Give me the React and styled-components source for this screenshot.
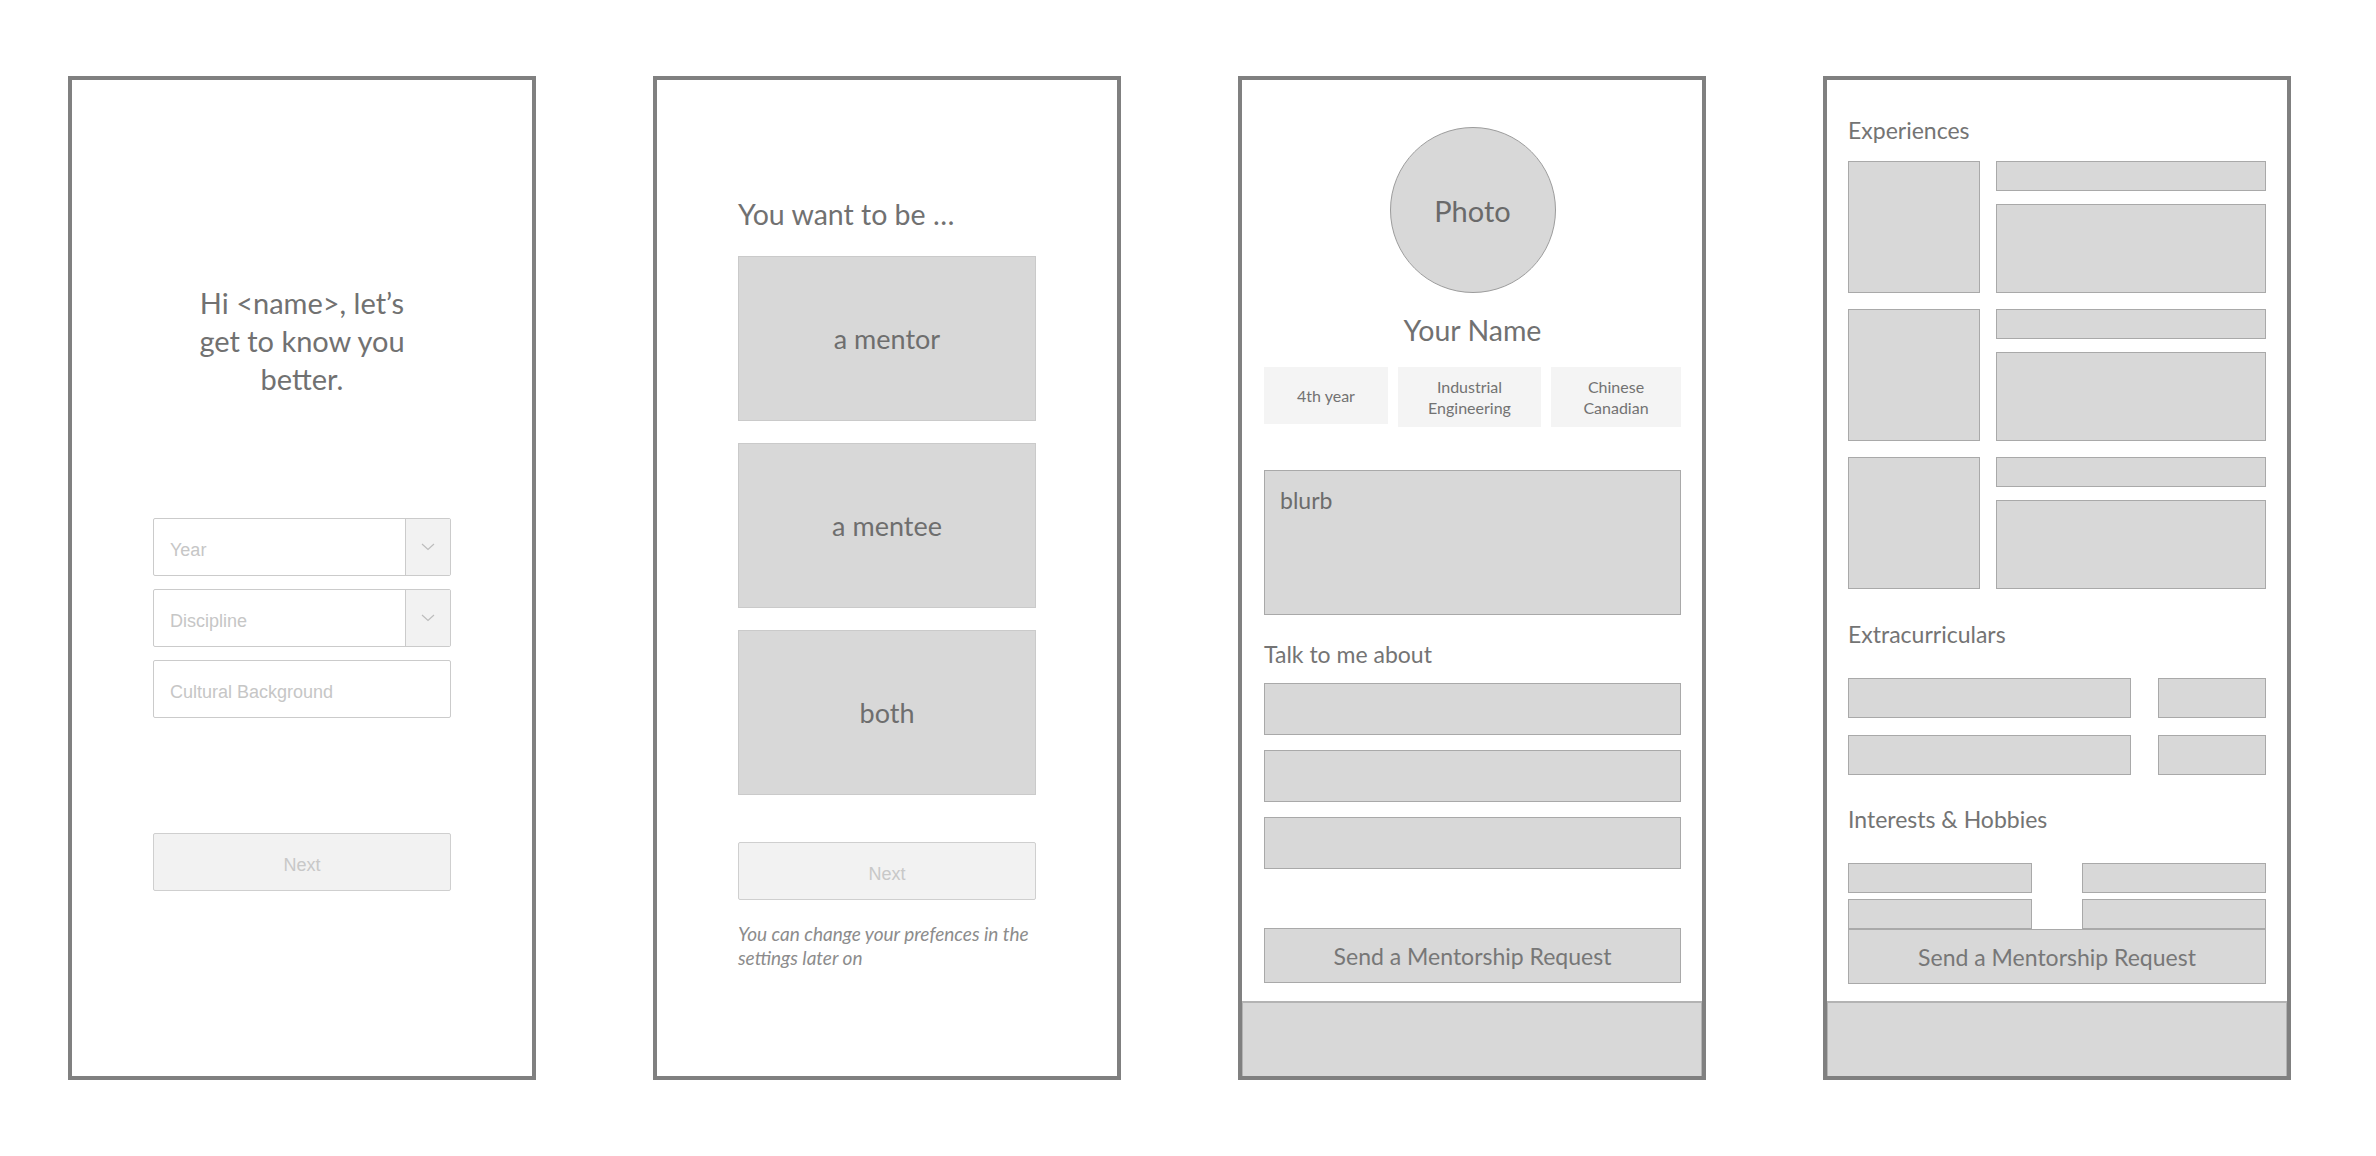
import React from 'react'
import styled, { createGlobalStyle } from 'styled-components';

const Global = createGlobalStyle`
  html, body {
    margin: 0;
    padding: 0;
    background: #fff;
  }
  body {
    font-family: Lato, "Open Sans", sans-serif;
    color: #6f6f6f;
  }
`

const Canvas = styled.div`
  display: flex;
  gap: 117px;
  padding: 76px 0 0 68px;
  width: 2376px;
  height: 1156px;
  box-sizing: border-box;
`

const Phone = styled.div`
  width: 468px;
  height: 1004px;
  box-sizing: border-box;
  border: 4px solid #808080;
  background: #fff;
  display: flex;
  flex-direction: column;
  overflow: hidden;
`

const Body = styled.div`
  flex: 1;
  display: flex;
  flex-direction: column;
  padding: ${p => p.pad || '0'};
  align-items: ${p => (p.center ? 'center' : 'stretch')};
`

const Footer = styled.div`
  height: 75px;
  box-sizing: border-box;
  background: #d8d8d8;
  border-top: 2px solid #b3b3b3;
  border-left: 1px solid #b3b3b3;
  border-right: 1px solid #b3b3b3;
`

/* screen 1 */
const Greeting = styled.h1`
  margin: 0;
  text-align: center;
  font-weight: 400;
  font-size: 29px;
  line-height: 38px;
  color: #717171;
`

const Form = styled.div`
  display: flex;
  flex-direction: column;
  gap: 13px;
  width: 298px;
  margin-top: 120px;
`

const Field = styled.div`
  height: 58px;
  box-sizing: border-box;
  border: 1px solid #cbcbcb;
  border-radius: 2px;
  background: #fff;
  display: flex;
  align-items: stretch;
`

const Placeholder = styled.span`
  flex: 1;
  display: flex;
  align-items: center;
  padding: 6px 0 0 16px;
  font-family: "Liberation Sans", Arial, sans-serif;
  font-size: 18px;
  color: #c6c6c6;
`

const Caret = styled.div`
  width: 44px;
  border-left: 1px solid #cbcbcb;
  background: #f2f2f2;
  display: flex;
  align-items: center;
  justify-content: center;
`

const NextButton = styled.div`
  width: 298px;
  height: 58px;
  box-sizing: border-box;
  margin-top: ${p => p.top || '0'};
  border: 1px solid #cfcfcf;
  border-radius: 2px;
  background: #f2f2f2;
  display: flex;
  align-items: center;
  justify-content: center;
  padding-top: 6px;
  font-family: "Liberation Sans", Arial, sans-serif;
  font-size: 18px;
  color: #c8c8c8;
`

/* screen 2 */
const Question = styled.h2`
  margin: 0 0 25px;
  font-weight: 400;
  font-size: 28.5px;
  line-height: 34px;
  color: #717171;
`

const Choices = styled.div`
  display: flex;
  flex-direction: column;
  gap: 22px;
  width: 298px;
`

const Choice = styled.div`
  height: 165px;
  box-sizing: border-box;
  background: #d8d8d8;
  border: 1px solid #cacaca;
  display: flex;
  align-items: center;
  justify-content: center;
  font-size: 27px;
  color: #6e6e6e;
`

const Hint = styled.p`
  margin: 22px 0 0;
  width: 310px;
  font-style: italic;
  font-size: 19px;
  line-height: 24px;
  color: #8c8c8c;
`

/* screen 3 */
const Photo = styled.div`
  width: 166px;
  height: 166px;
  box-sizing: border-box;
  align-self: center;
  border-radius: 50%;
  border: 1px solid #9c9c9c;
  background: #d8d8d8;
  display: flex;
  align-items: center;
  justify-content: center;
  font-size: 29px;
  color: #6a6a6a;
`

const Name = styled.div`
  margin-top: 20px;
  text-align: center;
  font-size: 28.5px;
  line-height: 34px;
  color: #717171;
`

const Tags = styled.div`
  display: flex;
  gap: 10px;
  margin-top: 20px;
  align-items: flex-start;
`

const Tag = styled.div`
  width: ${p => p.w}px;
  height: ${p => p.h}px;
  background: #f4f4f4;
  display: flex;
  align-items: center;
  justify-content: center;
  text-align: center;
  font-size: 16px;
  line-height: 21px;
  color: #727272;
`

const Block = styled.div`
  height: ${p => p.h}px;
  box-sizing: border-box;
  background: #d8d8d8;
  border: 1px solid #a9a9a9;
  margin-top: ${p => p.top || 0}px;
`

const Blurb = styled(Block)`
  padding: 14px 0 0 15px;
  font-size: 23px;
  line-height: 30px;
  color: #6c6c6c;
`

const Label = styled.div`
  margin-top: ${p => p.top}px;
  font-size: 23px;
  line-height: 28px;
  color: #747474;
`

const Bars = styled.div`
  display: flex;
  flex-direction: column;
  gap: 15px;
  margin-top: 15px;
`

const SendButton = styled.div`
  height: 55px;
  box-sizing: border-box;
  margin-top: ${p => p.top || 0}px;
  background: #d8d8d8;
  border: 1px solid #a9a9a9;
  display: flex;
  align-items: center;
  justify-content: center;
  font-size: 23px;
  color: #777;
`

/* screen 4 */
const ExperienceList = styled.div`
  display: flex;
  flex-direction: column;
  gap: 16px;
  margin-top: 17px;
`

const Experience = styled.div`
  display: grid;
  grid-template-columns: 132px 1fr;
  column-gap: 16px;
  height: 132px;
`

const ExperienceText = styled.div`
  display: grid;
  grid-template-rows: 30px 1fr;
  row-gap: 13px;
`

const Cell = styled.div`
  box-sizing: border-box;
  background: #d8d8d8;
  border: 1px solid #a9a9a9;
`

const CellGrid = styled.div`
  display: grid;
  grid-template-columns: ${p => p.cols};
  grid-auto-rows: ${p => p.rows};
  column-gap: ${p => p.cgap}px;
  row-gap: ${p => p.rgap}px;
  margin-top: 30px;
`

const Chevron = () => (
  <svg width="14" height="8" viewBox="0 0 14 8">
    <polyline points="1,1 7,6.5 13,1" fill="none" stroke="#bdbdbd" strokeWidth="1.2" />
  </svg>
)

const Select = ({ label }) => (
  <Field>
    <Placeholder>{label}</Placeholder>
    <Caret><Chevron /></Caret>
  </Field>
)

const App = () => {
  return (
    <>
      <Global />
      <Canvas>
        <Phone>
          <Body center pad="204px 0 0">
            <Greeting>Hi &lt;name&gt;, let’s<br />get to know you<br />better.</Greeting>
            <Form>
              <Select label="Year" />
              <Select label="Discipline" />
              <Field>
                <Placeholder>Cultural Background</Placeholder>
              </Field>
            </Form>
            <NextButton top="115px">Next</NextButton>
          </Body>
        </Phone>

        <Phone>
          <Body pad="117px 0 0 81px">
            <Question>You want to be …</Question>
            <Choices>
              <Choice>a mentor</Choice>
              <Choice>a mentee</Choice>
              <Choice>both</Choice>
            </Choices>
            <NextButton top="47px">Next</NextButton>
            <Hint>You can change your prefences in the settings later on</Hint>
          </Body>
        </Phone>

        <Phone>
          <Body pad="47px 21px 0 22px">
            <Photo>Photo</Photo>
            <Name>Your Name</Name>
            <Tags>
              <Tag w={124} h={57}>4th year</Tag>
              <Tag w={143} h={60}>Industrial<br />Engineering</Tag>
              <Tag w={130} h={60}>Chinese<br />Canadian</Tag>
            </Tags>
            <Blurb h={145} top={43}>blurb</Blurb>
            <Label top={25}>Talk to me about</Label>
            <Bars>
              <Block h={52} />
              <Block h={52} />
              <Block h={52} />
            </Bars>
            <SendButton top={59}>Send a Mentorship Request</SendButton>
          </Body>
          <Footer />
        </Phone>

        <Phone>
          <Body pad="36px 21px 0">
            <Label top={0}>Experiences</Label>
            <ExperienceList>
              {[0, 1, 2].map(i => (
                <Experience key={i}>
                  <Cell />
                  <ExperienceText>
                    <Cell />
                    <Cell />
                  </ExperienceText>
                </Experience>
              ))}
            </ExperienceList>
            <Label top={31}>Extracurriculars</Label>
            <CellGrid cols="283px 108px" rows="40px" cgap={27} rgap={17}>
              <Cell /><Cell /><Cell /><Cell />
            </CellGrid>
            <Label top={30}>Interests &amp; Hobbies</Label>
            <CellGrid cols="184px 184px" rows="30px" cgap={50} rgap={6}>
              <Cell /><Cell /><Cell /><Cell />
            </CellGrid>
            <SendButton top={0}>Send a Mentorship Request</SendButton>
          </Body>
          <Footer />
        </Phone>
      </Canvas>
    </>
  )
}

export default App;
